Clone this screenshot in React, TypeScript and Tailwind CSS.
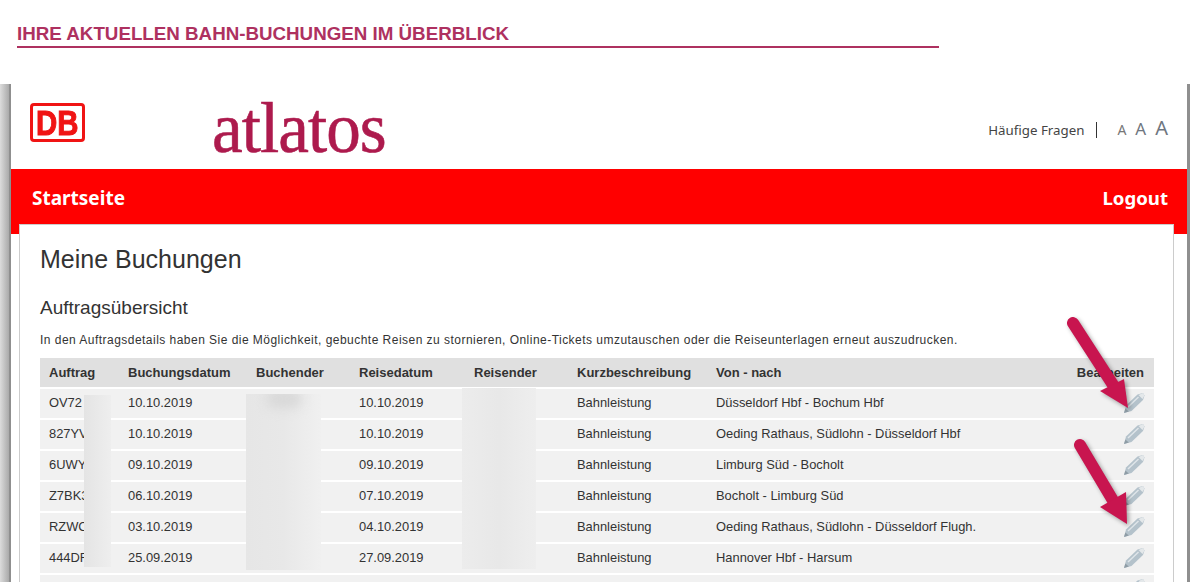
import React from "react";

type Row = {
    id: string;
    booked: string;
    travel: string;
    route: string;
};

const rows: Row[] = [
    { id: "OV72", booked: "10.10.2019", travel: "10.10.2019", route: "Düsseldorf Hbf - Bochum Hbf" },
    { id: "827YV", booked: "10.10.2019", travel: "10.10.2019", route: "Oeding Rathaus, Südlohn - Düsseldorf Hbf" },
    { id: "6UWY", booked: "09.10.2019", travel: "09.10.2019", route: "Limburg Süd - Bocholt" },
    { id: "Z7BK3", booked: "06.10.2019", travel: "07.10.2019", route: "Bocholt - Limburg Süd" },
    { id: "RZWC", booked: "03.10.2019", travel: "04.10.2019", route: "Oeding Rathaus, Südlohn - Düsseldorf Flugh." },
    { id: "444DF", booked: "25.09.2019", travel: "27.09.2019", route: "Hannover Hbf - Harsum" },
    { id: "", booked: "", travel: "", route: "" },
];

function Pencil() {
    return (
        <svg width="22" height="22" viewBox="0 0 22 22" className="block">
            <path d="M1 21 L3 13.5 L14.5 2.5 L20 1 L21.5 3.5 L20 8 L8.5 19 Z" fill="#b4c2cb" />
            <path d="M15.5 3 L20 1 L21.5 3.5 L19.5 7 Z" fill="#e4e8ea" />
            <path d="M4.5 14.5 L15 4.5 L16 5.5 L5.5 15.5 Z" fill="#dfe5e9" />
            <path d="M1 21 L2.4 16.5 L5.8 19.6 Z" fill="#8e9ca5" />
        </svg>
    );
}

function Arrow({ x1, y1, x2, y2, barbA, barbB }: { x1: number; y1: number; x2: number; y2: number; barbA: string; barbB: string }) {
    const endX = x1 + (x2 - x1) * 0.8;
    const endY = y1 + (y2 - y1) * 0.8;
    return (
        <>
            <line x1={x1} y1={y1} x2={endX} y2={endY} stroke="#c8154f" strokeWidth="12" strokeLinecap="round" />
            <polygon points={`${barbA} ${x2},${y2} ${barbB}`} fill="#c8154f" />
        </>
    );
}

export default function App() {
    return (
        <div className="relative h-[582px] overflow-hidden bg-white font-['Liberation_Sans',sans-serif]">
            <div className="h-[84px] pl-[17px] pt-[23px]">
                <h1 className="w-[922px] border-b-2 border-[#ae3160] pb-[2px] text-[18.75px] leading-[21px] font-bold whitespace-nowrap text-[#ae3160]">
                    IHRE AKTUELLEN BAHN-BUCHUNGEN IM ÜBERBLICK
                </h1>
            </div>

            <div className="flex h-[498px]">
                <div className="w-[11px] shrink-0 border-r-2 border-[#8f8f8f] bg-gradient-to-r from-[#dcdcdc] to-[#aaaaaa]" />

                <div className="flex min-w-0 flex-1 flex-col">
                    <div className="flex h-[85px] shrink-0 items-start justify-between pr-[19px]">
                        <div className="flex items-start">
                            <div className="mt-[19px] ml-[19px] flex h-[39px] w-[55px] items-center justify-center rounded-[4px] border-[3px] border-[#f01414] text-[35px] leading-none font-bold text-[#f01414] [-webkit-text-stroke:1px_#f01414]">
                                <span className="scale-x-[0.84]">DB</span>
                            </div>
                            <div className="mt-[3px] ml-[127px] origin-left scale-x-[0.96] font-['Liberation_Serif',serif] text-[72px] leading-[82px] tracking-[-1px] text-[#ad1a4d] [-webkit-text-stroke:0.6px_#ad1a4d]">
                                atlatos
                            </div>
                        </div>
                        <div className="mt-[36px] flex items-baseline font-['Noto_Sans',sans-serif] text-[#444]">
                            <span className="border-r border-[#333] pr-[12px] text-[13.3px] leading-[16px]">Häufige Fragen</span>
                            <span className="ml-[20px] text-[14px] leading-[16px] text-[#777]">A</span>
                            <span className="ml-[9px] text-[17px] leading-[16px] text-[#6f7680]">A</span>
                            <span className="ml-[9px] text-[20px] leading-[16px] text-[#6f7680]">A</span>
                        </div>
                    </div>

                    <div className="flex h-[55px] shrink-0 items-center justify-between bg-[#ff0000] pt-[3px] pr-[19px] pl-[21px] font-['Noto_Sans',sans-serif] text-[19px] font-bold text-white">
                        <span>Startseite</span>
                        <span className="text-[18.6px]">Logout</span>
                    </div>

                    <div className="min-h-0 flex-1 bg-[linear-gradient(#ff0000_10px,#ffffff_10px)] pr-[13px] pl-[8px]">
                        <div className="h-full border border-b-0 border-[#cccccc] bg-white px-[20px] pt-[19px] text-[#333]">
                            <h2 className="text-[25px] leading-[30px]">Meine Buchungen</h2>
                            <h3 className="mt-[22px] text-[19px] leading-[24px]">Auftragsübersicht</h3>
                            <p className="mt-[12px] text-[12px] leading-[16px] tracking-[0.47px] whitespace-nowrap">
                                In den Auftragsdetails haben Sie die Möglichkeit, gebuchte Reisen zu stornieren, Online-Tickets umzutauschen oder die Reiseunterlagen erneut auszudrucken.
                            </p>
                            <table className="mt-[10px] w-[1114px] table-fixed border-separate border-spacing-0 text-[12.9px] leading-[16px]">
                                <colgroup>
                                    <col className="w-[88px]" />
                                    <col className="w-[128px]" />
                                    <col className="w-[103px]" />
                                    <col className="w-[115px]" />
                                    <col className="w-[103px]" />
                                    <col className="w-[139px]" />
                                    <col className="w-[300px]" />
                                    <col />
                                </colgroup>
                                <thead>
                                    <tr className="bg-[#e0e0e0] text-[13px] font-bold">
                                        <th className="h-[29px] pl-[9px] text-left">Auftrag</th>
                                        <th className="text-left">Buchungsdatum</th>
                                        <th className="text-left">Buchender</th>
                                        <th className="text-left">Reisedatum</th>
                                        <th className="text-left">Reisender</th>
                                        <th className="text-left">Kurzbeschreibung</th>
                                        <th className="text-left">Von - nach</th>
                                        <th className="pr-[10px] text-right">Bearbeiten</th>
                                    </tr>
                                </thead>
                                <tbody>
                                    {rows.map((r, i) => (
                                        <tr key={i} className="bg-[#f1f1f1]">
                                            <td className="h-[31px] border-t-2 border-white pb-[2px] pl-[9px]">{r.id}</td>
                                            <td className="border-t-2 border-white pb-[2px]">{r.booked}</td>
                                            <td className="border-t-2 border-white" />
                                            <td className="border-t-2 border-white pb-[2px]">{r.travel}</td>
                                            <td className="border-t-2 border-white" />
                                            <td className="border-t-2 border-white pb-[2px]">{r.id ? "Bahnleistung" : ""}</td>
                                            <td className="border-t-2 border-white pb-[2px]">{r.route}</td>
                                            <td className="border-t-2 border-white pr-[9px] pb-[2px]">
                                                <div className="flex justify-end">
                                                    <Pencil />
                                                </div>
                                            </td>
                                        </tr>
                                    ))}
                                </tbody>
                            </table>
                        </div>
                    </div>
                </div>

                <div className="w-[3px] shrink-0 bg-[#8f8f8f]" />
            </div>

            {/* blur patches laid over the names */}
            <div className="absolute top-[395px] left-[84px] h-[172px] w-[27px] bg-gradient-to-r from-[#e4e4e4] to-[#eeeeee]" />
            <div className="absolute top-[394px] left-[246px] h-[176px] w-[75px] overflow-hidden bg-gradient-to-r from-[#e6e6e6] via-[#e8e8e8] to-[#f0f0f0]">
                <div className="mx-auto mt-[-4px] h-[18px] w-[36px] rounded-full bg-[#d8d8d8] blur-[6px]" />
            </div>
            <div className="absolute top-[388px] left-[462px] h-[181px] w-[74px] bg-gradient-to-r from-[#ececec] via-[#e8e8e8] to-[#eeeeee]" />

            <svg width="1190" height="582" viewBox="0 0 1190 582" className="pointer-events-none absolute inset-0 drop-shadow-[2px_2px_2px_rgba(0,0,0,0.35)]">
                <Arrow x1={1073} y1={323} x2={1128} y2={408} barbA="1100,391" barbB="1124,379" />
                <Arrow x1={1080} y1={445} x2={1127} y2={524} barbA="1100,507" barbB="1126,492" />
            </svg>
        </div>
    );
}
